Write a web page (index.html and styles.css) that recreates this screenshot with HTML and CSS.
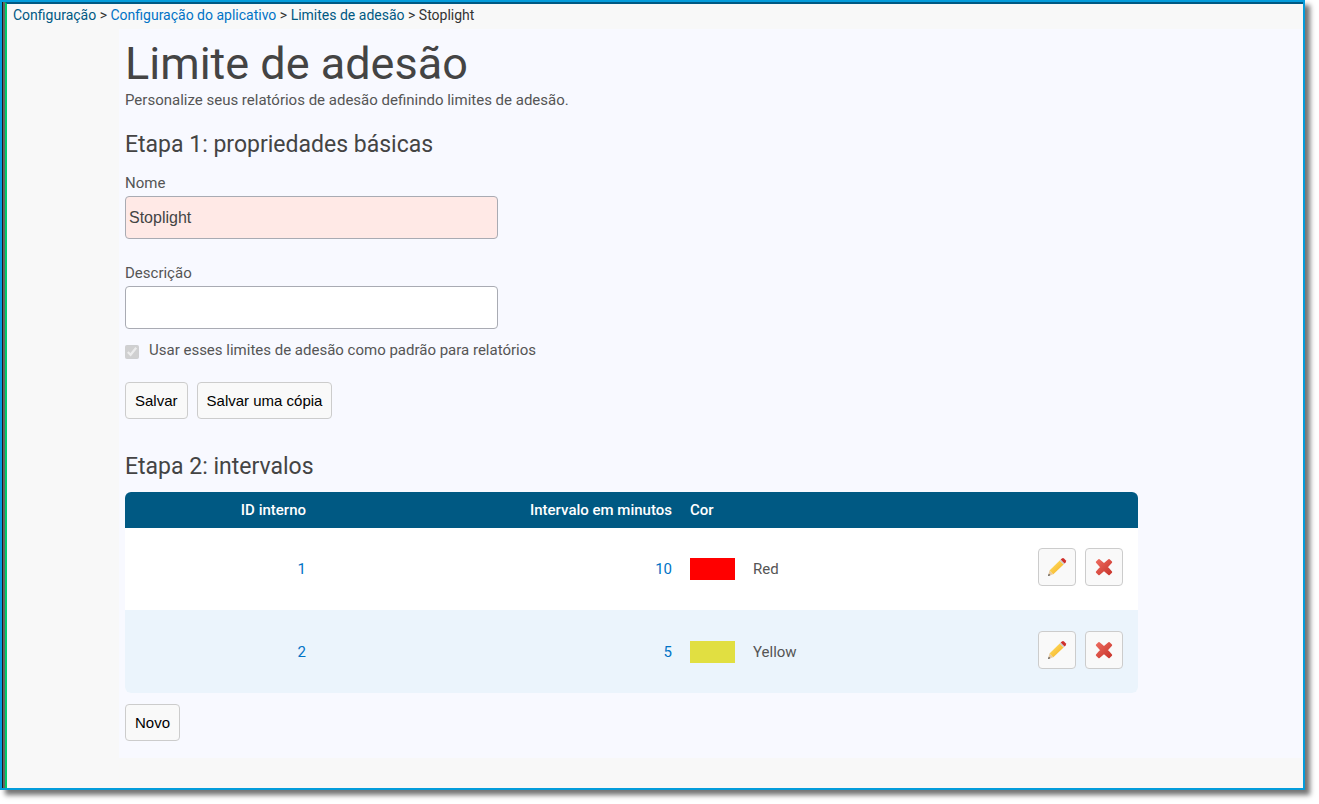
FILE: index.html
```html
<!DOCTYPE html>
<html lang="pt-BR">
<head>
<meta charset="utf-8">
<title>Limite de adesão</title>
<link rel="stylesheet" href="styles.css">
</head>
<body>
<svg class="defs" width="0" height="0" aria-hidden="true">
  <defs>
    <linearGradient id="wood" x1="0" y1="0" x2="1" y2="1"><stop offset="0" stop-color="#ffe36b"/><stop offset="1" stop-color="#f5ad1c"/></linearGradient>
    <linearGradient id="cross" x1="0" y1="0" x2="1" y2="1"><stop offset="0" stop-color="#ec6a5e"/><stop offset="1" stop-color="#c9352c"/></linearGradient>
    <symbol id="pencil" viewBox="0 0 20 20">
      <path d="M1 19 2.5 13.6 6.3 17.3z" fill="#e8c9a0"/>
      <path d="M1 19 1.8 16.7 3.4 18.2z" fill="#4c4c4c"/>
      <path d="M2.5 13.6 12.7 3.6 16.6 7.4 6.3 17.3z" fill="url(#wood)"/>
      <path d="M12.7 3.6 13.7 2.6 17.6 6.4 16.6 7.4z" fill="#c9cdd3"/>
      <path d="M13.7 2.6 14.9 1.5Q16 .6 17 1.5L18.7 3.2Q19.6 4.2 18.7 5.2L17.6 6.4z" fill="#cf2f2b"/>
    </symbol>
    <symbol id="delete" viewBox="0 0 20 20">
      <path d="M5 2.9 10 7.2 15 2.9 17.3 5.2 13 10 17.3 15 15 17.3 10 13 5 17.3 2.7 15 7 10 2.7 5.2z" fill="url(#cross)" stroke="url(#cross)" stroke-width="1.8" stroke-linejoin="round"/>
    </symbol>
  </defs>
</svg>
<div class="frame">
  <div class="rail">
    <nav class="breadcrumb" aria-label="Trilha">
      <a class="crumb" href="#">Configuração</a> &gt; <a class="crumb crumb-active" href="#">Configuração do aplicativo</a> &gt; <a class="crumb" href="#">Limites de adesão</a> &gt; <span>Stoplight</span>
    </nav>
    <main class="content">
      <h1 class="title">Limite de adesão</h1>
      <p class="intro">Personalize seus relatórios de adesão definindo limites de adesão.</p>
      <form class="form">
        <h2 class="step">Etapa 1: propriedades básicas</h2>
        <div class="field">
          <label for="name">Nome</label>
          <input class="text required" id="name" type="text" value="Stoplight">
        </div>
        <div class="field">
          <label for="description">Descrição</label>
          <input class="text" id="description" type="text">
        </div>
        <div class="check-row">
          <input class="check" id="default" type="checkbox" checked disabled>
          <label for="default">Usar esses limites de adesão como padrão para relatórios</label>
        </div>
        <div class="buttons">
          <button class="btn" type="submit">Salvar</button>
          <button class="btn" type="button">Salvar uma cópia</button>
        </div>
      </form>
      <h2 class="step">Etapa 2: intervalos</h2>
      <table class="ranges">
        <colgroup><col class="col-id"><col class="col-minutes"><col class="col-swatch"><col><col class="col-actions"></colgroup>
        <thead>
          <tr><th class="num" scope="col">ID interno</th><th class="num" scope="col">Intervalo em minutos</th><th scope="col" colspan="2">Cor</th><td></td></tr>
        </thead>
        <tbody>
          <tr>
            <td class="num value">1</td><td class="num value">10</td><td><div class="swatch red"></div></td><td>Red</td>
            <td class="actions"><div class="action-list">
              <button class="icon-btn" type="button" aria-label="Editar Red"><svg class="icon"><use href="#pencil"/></svg></button>
              <button class="icon-btn" type="button" aria-label="Excluir Red"><svg class="icon"><use href="#delete"/></svg></button>
            </div></td>
          </tr>
          <tr>
            <td class="num value">2</td><td class="num value">5</td><td><div class="swatch yellow"></div></td><td>Yellow</td>
            <td class="actions"><div class="action-list">
              <button class="icon-btn" type="button" aria-label="Editar Yellow"><svg class="icon"><use href="#pencil"/></svg></button>
              <button class="icon-btn" type="button" aria-label="Excluir Yellow"><svg class="icon"><use href="#delete"/></svg></button>
            </div></td>
          </tr>
        </tbody>
      </table>
      <button class="btn" type="button">Novo</button>
    </main>
  </div>
</div>
</body>
</html>
```
FILE: styles.css
```css
* { box-sizing: border-box; }
body {
  margin: 0;
  padding-right: 14px;
  padding-bottom: 14px;
  min-height: 100vh;
  display: flex;
  background: #fff;
  color: #555;
  font: 15px/20px Roboto, "Liberation Sans", sans-serif;
}
.defs { position: absolute; }
.frame {
  flex: 1;
  display: flex;
  border: 2px solid #049cdb;
  box-shadow: 5px 5px 5px rgba(0, 0, 0, .55);
  background: linear-gradient(to right, #1c1c1c 1px, #666 1px);
}
.rail {
  flex: 1;
  margin-left: 3px;
  padding-bottom: 29px;
  border-left: 2px solid #00cc6a;
  border-top: 2px solid #005983;
  background: #f8f8f8;
}
.breadcrumb {
  height: 25px;
  padding: 1px 6px;
  font-size: 14px;
  color: #333;
}
.crumb { color: #005983; text-decoration: none; }
.crumb-active { color: #0073c6; }
.content {
  margin-left: 112px;
  padding: 9px 165px 17px 6px;
  background: #f8f9ff;
}
.title {
  margin: 0;
  font-size: 45px;
  line-height: 52px;
  font-weight: 400;
  color: #444;
}
.intro { margin: 0 0 21px; }
.step {
  margin: 0 0 11px;
  font-size: 23px;
  line-height: 28px;
  font-weight: 400;
  color: #444;
}
.form { margin-bottom: 34px; }
.field {
  display: flex;
  flex-direction: column;
  gap: 3px;
  max-width: 373px;
  margin-bottom: 24px;
}
.step + .field { margin-top: 14px; }
.field + .field { margin-bottom: 11px; }
.text {
  height: 43px;
  padding: 0 3px;
  border: 1px solid #a9abb3;
  border-radius: 4px;
  background: #fff;
  color: #444;
  font: 16px "Liberation Sans", Arial, sans-serif;
}
.required { background: #ffe9e6; }
.check-row {
  display: flex;
  align-items: center;
  gap: 10px;
  margin-bottom: 22px;
}
.check { width: 14px; height: 14px; margin: 3px 0 0; }
.buttons { display: flex; gap: 9px; }
.btn {
  height: 37px;
  padding: 0 9px;
  border: 1px solid #ccc;
  border-radius: 4px;
  background: #f9f9f9;
  color: #000;
  font: 15px "Liberation Sans", Arial, sans-serif;
}
.ranges {
  width: 100%;
  table-layout: fixed;
  margin-bottom: 11px;
  border-spacing: 0;
  border-radius: 6px;
  overflow: hidden;
  background: #fff;
}
.ranges th, .ranges td { padding: 0 9px; text-align: left; }
.ranges thead { background: #005983; color: #fff; }
.ranges th { height: 36px; font-weight: 500; }
.ranges tbody tr:nth-child(even) { background: #ebf4fc; }
.ranges .num { text-align: right; }
.ranges .value { color: #0073c6; }
.ranges .actions { padding: 20px 15px 24px 0; }
.ranges tr + tr .actions { padding-top: 21px; }
.col-id { width: 190px; }
.col-minutes { width: 366px; }
.col-swatch { width: 63px; }
.col-actions { width: 110px; }
.swatch { height: 22px; }
.red { background: #f00; }
.yellow { background: #e1df41; }
.action-list { display: flex; justify-content: flex-end; gap: 9px; }
.icon-btn {
  display: flex;
  align-items: center;
  justify-content: center;
  width: 38px;
  height: 38px;
  padding: 0;
  border: 1px solid #ccc;
  border-radius: 4px;
  background: #f9f9f9;
}
.icon { width: 20px; height: 20px; }
```
